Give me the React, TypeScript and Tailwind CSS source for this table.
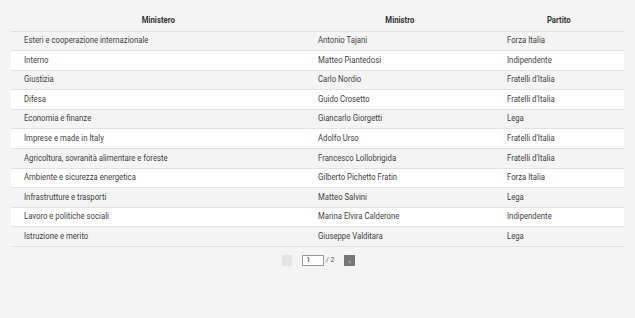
const rows = [
  ['Esteri e cooperazione internazionale', 'Antonio Tajani', 'Forza Italia'],
  ['Interno', 'Matteo Piantedosi', 'Indipendente'],
  ['Giustizia', 'Carlo Nordio', "Fratelli d'Italia"],
  ['Difesa', 'Guido Crosetto', "Fratelli d'Italia"],
  ['Economia e finanze', 'Giancarlo Giorgetti', 'Lega'],
  ['Imprese e made in Italy', 'Adolfo Urso', "Fratelli d'Italia"],
  ['Agricoltura, sovranità alimentare e foreste', 'Francesco Lollobrigida', "Fratelli d'Italia"],
  ['Ambiente e sicurezza energetica', 'Gilberto Pichetto Fratin', 'Forza Italia'],
  ['Infrastrutture e trasporti', 'Matteo Salvini', 'Lega'],
  ['Lavoro e politiche sociali', 'Marina Elvira Calderone', 'Indipendente'],
  ['Istruzione e merito', 'Giuseppe Valditara', 'Lega'],
]

// condensed text: Roboto squeezed horizontally
function Cond({ children, center }: { children: React.ReactNode; center?: boolean }) {
  return (
    <span
      className={`inline-block whitespace-nowrap scale-x-[0.86] ${center ? 'origin-center' : 'origin-left'}`}
    >
      {children}
    </span>
  )
}

export default function App() {
  return (
    <div className="min-h-[318px] w-full bg-[#f4f4f4] px-[11px] pt-[10px] font-['Roboto',sans-serif] text-[9px] text-[#3f3f3f]">
      <table className="w-[613px] table-fixed border-collapse">
        <colgroup>
          <col className="w-[294px]" />
          <col className="w-[189px]" />
          <col className="w-[130px]" />
        </colgroup>
        <thead>
          <tr className="h-[21px] border-b border-[#dedede]">
            <th className="text-center font-bold text-[#333]"><Cond center>Ministero</Cond></th>
            <th className="text-center font-bold text-[#333]"><Cond center>Ministro</Cond></th>
            <th className="text-center font-bold text-[#333]"><Cond center>Partito</Cond></th>
          </tr>
        </thead>
        <tbody>
          {rows.map((r, i) => (
            <tr
              key={r[0]}
              className={`h-[19.6px] border-b border-[#e2e2e2] ${i % 2 === 1 ? 'bg-white' : 'bg-[#f4f4f4]'}`}
            >
              <td className="pl-[13px]"><Cond>{r[0]}</Cond></td>
              <td className="pl-[13px]"><Cond>{r[1]}</Cond></td>
              <td className="pl-[13px]"><Cond>{r[2]}</Cond></td>
            </tr>
          ))}
        </tbody>
      </table>

      {/* Pagination */}
      <div className="mt-[7px] flex items-center justify-center pl-[2px]">
        <button className="flex h-[11px] w-[10px] items-center justify-center bg-[#e4e4e4] text-[6px] text-white">‹</button>
        <input
          readOnly
          value="1"
          className="ml-[10px] h-[11px] w-[22px] border border-[#999] bg-white px-[3px] text-[8px] text-[#333] outline-none"
        />
        <span className="ml-[2px] text-[8px] text-[#555]"><Cond>/ 2</Cond></span>
        <button className="ml-[8px] flex h-[11px] w-[11px] items-center justify-center bg-[#777] text-[6px] text-white">›</button>
      </div>
    </div>
  )
}
